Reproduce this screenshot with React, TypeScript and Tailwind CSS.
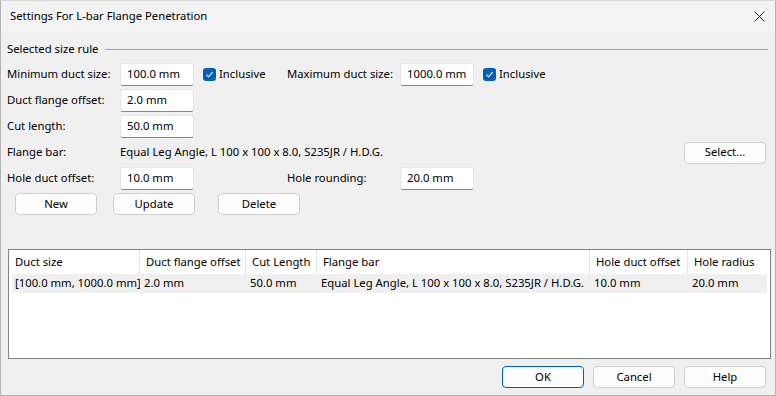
import React from 'react';

const font = { fontFamily: '"Noto Sans", "Open Sans", sans-serif' };

function Field({ value, w = 'w-[74px]' }: { value: string; w?: string }) {
  return (
    <div className={`${w} shrink-0 h-[23px] bg-white border border-[#e5e5e5] border-b-[#868686] rounded-[3px] px-[6px] flex items-center whitespace-nowrap`}>
      {value}
    </div>
  );
}

function Check({ label }: { label: string }) {
  return (
    <div className="flex items-center gap-[3px] shrink-0">
      <div className="w-[13px] h-[13px] rounded-[3px] bg-[#005fb8] flex items-center justify-center">
        <svg width="9" height="9" viewBox="0 0 9 9">
          <path d="M1.5 4.8 L3.6 6.8 L7.6 2.2" fill="none" stroke="white" strokeWidth="1.1" />
        </svg>
      </div>
      <span className="whitespace-nowrap">{label}</span>
    </div>
  );
}

function Btn({ label, w = 'w-[82px]', primary = false }: { label: string; w?: string; primary?: boolean }) {
  return (
    <div
      className={`${w} shrink-0 h-[22px] rounded-[4px] flex items-center justify-center bg-[#fdfdfd] border ${
        primary ? 'border-[#005fb8]' : 'border-[#d0d0d0]'
      }`}
    >
      {label}
    </div>
  );
}

const cols = [
  { title: 'Duct size', w: 'w-[131px]', v: '[100.0 mm, 1000.0 mm]' },
  { title: 'Duct flange offset', w: 'w-[106px]', v: '2.0 mm' },
  { title: 'Cut Length', w: 'w-[71px]', v: '50.0 mm' },
  { title: 'Flange bar', w: 'w-[273px]', v: 'Equal Leg Angle, L 100 x 100 x 8.0, S235JR / H.D.G.' },
  { title: 'Hole duct offset', w: 'w-[98px]', v: '10.0 mm' },
  { title: 'Hole radius', w: 'w-[70px]', v: '20.0 mm' },
];

export default function App() {
  return (
    <div className="w-[776px] h-[396px] bg-[#f0f0f0] text-[11.3px] text-black flex flex-col overflow-hidden border border-[#b4b4b4] border-t-[#d8d8d8]" style={font}>
      <div className="h-[31px] bg-[#f3f3f3] flex items-center justify-between pl-[9px] pr-[10px] shrink-0">
        <span>Settings For L-bar Flange Penetration</span>
        <svg width="11" height="11" viewBox="0 0 11 11">
          <path d="M0.5 0.5 L10.5 10.5 M10.5 0.5 L0.5 10.5" stroke="#222" strokeWidth="1" />
        </svg>
      </div>

      <div className="flex flex-col px-[6px]">
        <div className="flex items-center h-[18px] mt-[8px]">
          <span className="whitespace-nowrap">Selected size rule</span>
          <div className="flex-1 h-px bg-[#a0a0a0] ml-[6px] mr-[1px]" />
        </div>

        <div className="flex items-center mt-[5px] h-[23px]">
          <span className="w-[113px] shrink-0 whitespace-nowrap">Minimum duct size:</span>
          <Field value="100.0 mm" />
          <div className="w-[9px] shrink-0" />
          <div className="w-[84px] shrink-0"><Check label="Inclusive" /></div>
          <span className="w-[113px] shrink-0 whitespace-nowrap">Maximum duct size:</span>
          <Field value="1000.0 mm" />
          <div className="w-[9px] shrink-0" />
          <Check label="Inclusive" />
        </div>

        <div className="flex items-center mt-[3px] h-[23px]">
          <span className="w-[113px] shrink-0">Duct flange offset:</span>
          <Field value="2.0 mm" />
        </div>

        <div className="flex items-center mt-[3px] h-[23px]">
          <span className="w-[113px] shrink-0">Cut length:</span>
          <Field value="50.0 mm" />
        </div>

        <div className="flex items-center mt-[3px] h-[23px]">
          <span className="w-[113px] shrink-0">Flange bar:</span>
          <span className="flex-1 whitespace-nowrap">Equal Leg Angle, L 100 x 100 x 8.0, S235JR / H.D.G.</span>
          <div className="mr-[3px]"><Btn label="Select..." /></div>
        </div>

        <div className="flex items-center mt-[3px] h-[23px]">
          <span className="w-[113px] shrink-0">Hole duct offset:</span>
          <Field value="10.0 mm" />
          <div className="w-[93px] shrink-0" />
          <span className="w-[113px] shrink-0">Hole rounding:</span>
          <Field value="20.0 mm" />
        </div>

        <div className="flex items-center mt-[3px] pl-[8px] gap-[16px]">
          <Btn label="New" />
          <Btn label="Update" />
          <div className="ml-[7px]"><Btn label="Delete" /></div>
        </div>

        <div className="mt-[34px] ml-[1px] w-[763px] h-[110px] bg-white border border-[#828282]">
          <div className="flex h-[24px]">
            {cols.map((c, i) => (
              <div
                key={c.title}
                className={`${c.w} shrink-0 flex items-center px-[6px] whitespace-nowrap overflow-hidden ${i < cols.length - 1 ? 'border-r border-[#e5e5e5]' : ''}`}
              >
                {c.title}
              </div>
            ))}
          </div>
          <div className="flex h-[19px] bg-[#f0f0f0] mx-[3px]">
            {cols.map((c, i) => (
              <div
                key={c.title}
                className={`${i === 0 ? 'w-[128px] pl-[3px]' : c.w + ' pl-[4px]'} ${i === cols.length - 1 ? 'flex-1' : ''} shrink-0 flex items-center whitespace-nowrap overflow-hidden`}
              >
                {c.v}
              </div>
            ))}
          </div>
        </div>

        <div className="flex justify-end gap-[9px] mt-[7px] mr-[3px]">
          <Btn label="OK" primary />
          <Btn label="Cancel" />
          <Btn label="Help" />
        </div>
      </div>
    </div>
  );
}
